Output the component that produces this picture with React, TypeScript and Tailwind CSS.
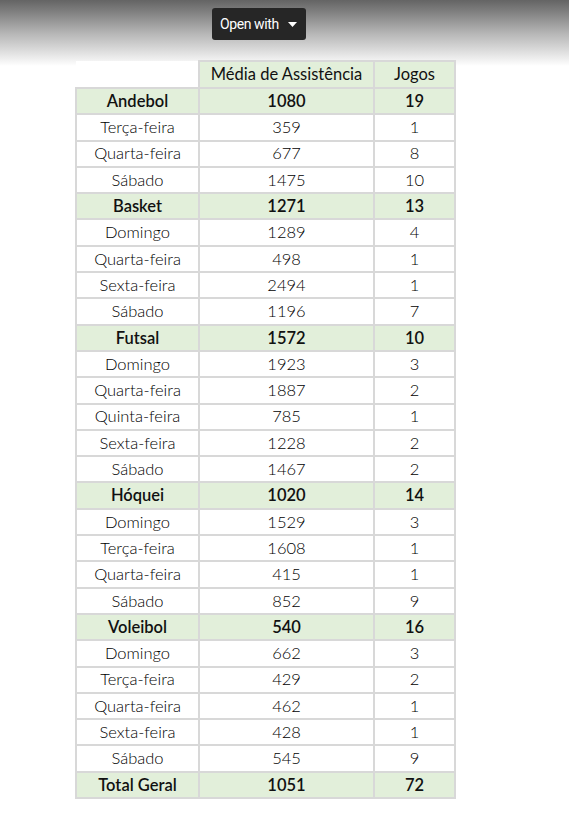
import React from "react";

type Row = { label: string; avg: number; games: number; group?: boolean };

const rows: Row[] = [
  { label: "Andebol", avg: 1080, games: 19, group: true },
  { label: "Terça-feira", avg: 359, games: 1 },
  { label: "Quarta-feira", avg: 677, games: 8 },
  { label: "Sábado", avg: 1475, games: 10 },
  { label: "Basket", avg: 1271, games: 13, group: true },
  { label: "Domingo", avg: 1289, games: 4 },
  { label: "Quarta-feira", avg: 498, games: 1 },
  { label: "Sexta-feira", avg: 2494, games: 1 },
  { label: "Sábado", avg: 1196, games: 7 },
  { label: "Futsal", avg: 1572, games: 10, group: true },
  { label: "Domingo", avg: 1923, games: 3 },
  { label: "Quarta-feira", avg: 1887, games: 2 },
  { label: "Quinta-feira", avg: 785, games: 1 },
  { label: "Sexta-feira", avg: 1228, games: 2 },
  { label: "Sábado", avg: 1467, games: 2 },
  { label: "Hóquei", avg: 1020, games: 14, group: true },
  { label: "Domingo", avg: 1529, games: 3 },
  { label: "Terça-feira", avg: 1608, games: 1 },
  { label: "Quarta-feira", avg: 415, games: 1 },
  { label: "Sábado", avg: 852, games: 9 },
  { label: "Voleibol", avg: 540, games: 16, group: true },
  { label: "Domingo", avg: 662, games: 3 },
  { label: "Terça-feira", avg: 429, games: 2 },
  { label: "Quarta-feira", avg: 462, games: 1 },
  { label: "Sexta-feira", avg: 428, games: 1 },
  { label: "Sábado", avg: 545, games: 9 },
  { label: "Total Geral", avg: 1051, games: 72, group: true },
];

const groupCls = "p-0 border-2 border-[#d8d8d8] bg-[#e2efda] text-center font-semibold text-[#111]";
const plainCls = "p-0 border-2 border-[#d8d8d8] text-center font-light text-black";

export default function App() {
  return (
    <div
      className="relative w-[569px] h-[817px] bg-white"
      style={{ fontFamily: "Lato, 'Open Sans', sans-serif" }}
    >
      <div className="absolute left-0 top-0 w-full h-[66px] bg-gradient-to-b from-[#646464] via-[#b5b5b5] to-white" />
      <div className="relative pt-[60px] pl-[75px]">
        <table className="border-collapse text-[16.5px] leading-none">
          <thead>
            <tr className="h-[27px]">
              <th className="w-[123px] p-0 bg-white"></th>
              <th className="w-[175px] p-0 border-2 border-[#d8d8d8] bg-[#e2efda] font-normal text-[#111]">
                Média de Assistência
              </th>
              <th className="w-[81px] p-0 border-2 border-[#d8d8d8] bg-[#e2efda] font-normal text-[#111]">
                Jogos
              </th>
            </tr>
          </thead>
          <tbody>
            {rows.map((r, i) => (
              <tr key={i} className="h-[26.3px]">
                <td className={r.group ? groupCls : plainCls}>{r.label}</td>
                <td className={r.group ? groupCls : plainCls}>{r.avg}</td>
                <td className={r.group ? groupCls : plainCls}>{r.games}</td>
              </tr>
            ))}
          </tbody>
        </table>
      </div>
      <div
        className="absolute left-[212px] top-[8px] w-[94px] h-[32px] rounded-[3px] bg-[#262626] flex items-center pl-[8px] gap-[9px] text-white text-[14px] tracking-[-0.4px]"
        style={{ fontFamily: "Roboto, 'Liberation Sans', sans-serif" }}
      >
        <span>Open with</span>
        <svg width="9" height="5" viewBox="0 0 9 5">
          <path d="M0 0 L9 0 L4.5 5 Z" fill="#fff" />
        </svg>
      </div>
    </div>
  );
}
